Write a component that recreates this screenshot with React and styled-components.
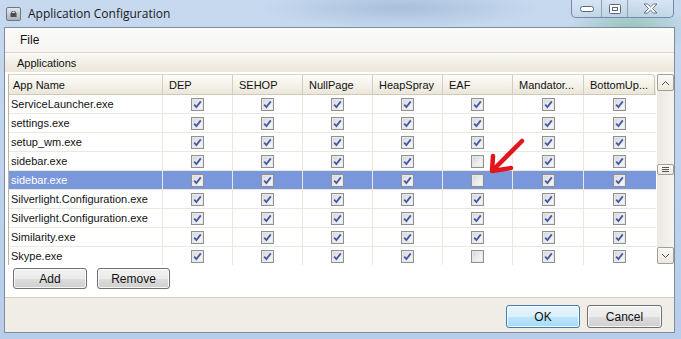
import React from "react";
import styled, { createGlobalStyle } from "styled-components";

const GlobalStyle = createGlobalStyle`
	html, body {
		margin: 0;
		padding: 0;
	}
	body {
		width: 681px;
		height: 339px;
		overflow: hidden;
		font-family: "Liberation Sans", Arial, sans-serif;
		background: linear-gradient(180deg, #c3d6ee 0%, #b9cfeb 40%, #aec8e8 100%);
	}
`;

const Window = styled.div`
	position: relative;
	width: 681px;
	height: 339px;
	display: flex;
	flex-direction: column;
	background:
		radial-gradient(ellipse 60px 30px at 630px 30px, rgba(90, 170, 120, 0.45), transparent),
		radial-gradient(ellipse 140px 20px at 400px 8px, rgba(150, 175, 205, 0.6), transparent),
		linear-gradient(180deg, #c6d9ef 0%, #b7cdea 100%);
`;

const TitleBar = styled.div`
	height: 27px;
	display: flex;
	align-items: flex-start;
	flex-shrink: 0;
`;

const AppIcon = styled.div`
	width: 13px;
	height: 12px;
	margin: 7px 0 0 6px;
	border: 1px solid #6f7780;
	border-radius: 2px;
	background: linear-gradient(180deg, #e4e8ec 0%, #a9b1ba 100%);
	display: flex;
	align-items: center;
	justify-content: center;
`;

const Title = styled.div`
	margin: 5px 0 0 7px;
	font-size: 12px;
	color: #1a1a1a;
	font-family: "Open Sans", sans-serif;
`;

const Caption = styled.div`
	margin-left: auto;
	margin-right: 7px;
	display: flex;
	height: 17px;
	border: 1px solid #7389a6;
	border-top: none;
	border-radius: 0 0 5px 5px;
	background: linear-gradient(180deg, rgba(230, 238, 248, 0.5), rgba(200, 216, 236, 0.6));
	overflow: hidden;
`;

const CaptionBtn = styled.div`
	width: ${(p) => p.w}px;
	display: flex;
	align-items: center;
	justify-content: center;
	border-left: ${(p) => (p.first ? "none" : "1px solid #8ea2bd")};
`;

const Client = styled.div`
	flex: 1;
	margin: 0 6px 6px 4px;
	border: 1px solid #7f8c9c;
	display: flex;
	flex-direction: column;
	background: #f0ede6;
`;

const MenuBar = styled.div`
	height: 24px;
	display: flex;
	align-items: center;
	padding-left: 15px;
	font-size: 12px;
	color: #111;
	background: linear-gradient(180deg, #fbfbfa 0%, #f6f5f1 100%);
	border-bottom: 1px solid #dcd6c5;
`;

const GroupHeader = styled.div`
	height: 19px;
	display: flex;
	align-items: center;
	padding-left: 12px;
	font-size: 11px;
	color: #111;
	background: linear-gradient(180deg, #fbfaf7 0%, #f1ede3 60%, #ebe6d8 100%);
`;

const Panel = styled.div`
	background: #fff;
	padding: 2px 0 8px 3px;
	display: flex;
	flex-direction: column;
	border-bottom: 1px solid #d6d0c2;
`;

const GridArea = styled.div`
	display: flex;
	align-items: flex-start;
`;

const Grid = styled.div`
	width: 647px;
	border-left: 1px solid #b9b4a6;
	font-size: 11px;
	color: #111;
`;

const HeaderRow = styled.div`
	display: grid;
	grid-template-columns: 154px 70px 70px 70px 70px 70px 71px 71px;
	height: 19px;
	background: linear-gradient(180deg, #fdfcfa 0%, #f4f1e9 55%, #ebe6d9 100%);
	border-top: 1px solid #d9d4c6;
	border-bottom: 1px solid #cfc9b8;
	border-radius: 0 4px 0 0;
`;

const HeadCell = styled.div`
	display: flex;
	align-items: center;
	padding-left: ${(p) => (p.first ? 4 : 6)}px;
	border-right: 1px solid #d4cebe;
	white-space: nowrap;
	overflow: hidden;
	&:last-child {
		border-right: 1px solid #c9c3b2;
		border-radius: 0 4px 0 0;
	}
`;

const Row = styled.div`
	display: grid;
	grid-template-columns: 154px 70px 70px 70px 70px 70px 71px 71px;
	height: 18px;
	border-bottom: 1px solid #ebe8df;
	background: ${(p) => (p.selected ? "#7b97dc" : "#fff")};
	color: ${(p) => (p.selected ? "#fff" : "#111")};
	&:last-child {
		border-bottom: none;
	}
`;

const NameCell = styled.div`
	display: flex;
	align-items: center;
	padding-left: 2px;
	border-right: 1px solid #ebe8df;
	white-space: nowrap;
`;

const BoxCell = styled.div`
	display: flex;
	align-items: center;
	justify-content: center;
	border-right: 1px solid #ebe8df;
	&:last-child {
		border-right: none;
	}
`;

const Box = styled.div`
	width: 11px;
	height: 11px;
	border: 1px solid #8f9092;
	background: linear-gradient(135deg, #d2d3d5 0%, #eceded 55%, #f7f7f7 100%);
	box-shadow: inset 0 0 0 1px #e8e8e8;
	display: flex;
	align-items: center;
	justify-content: center;
`;

const ScrollBar = styled.div`
	width: 17px;
	height: 190px;
	margin-left: 1px;
	background: linear-gradient(90deg, #ece9e2 0%, #f6f4f0 100%);
	display: flex;
	flex-direction: column;
	align-items: center;
	justify-content: space-between;
`;

const ScrollBtn = styled.div`
	width: 15px;
	height: 15px;
	border: 1px solid #a59f92;
	border-radius: 2px;
	background: linear-gradient(180deg, #fbfaf8 0%, #ece8df 100%);
	display: flex;
	align-items: center;
	justify-content: center;
`;

const Thumb = styled.div`
	width: 15px;
	height: 9px;
	border: 1px solid #a59f92;
	border-radius: 2px;
	background: linear-gradient(180deg, #fbfaf8 0%, #ece8df 100%);
	display: flex;
	align-items: center;
	justify-content: center;
`;

const ButtonRow = styled.div`
	display: flex;
	gap: 10px;
	padding: 3px 0 0 5px;
`;

const Button = styled.div`
	width: ${(p) => p.w || 70}px;
	height: ${(p) => p.h || 19}px;
	display: flex;
	align-items: center;
	justify-content: center;
	font-size: 12px;
	color: #111;
	border: 1px solid ${(p) => (p.primary ? "#3c7fb1" : "#707070")};
	border-radius: 3px;
	background: ${(p) =>
		p.primary
			? "linear-gradient(180deg, #eaf6fd 0%, #d9f0fc 50%, #bee6fd 51%, #a7d9f5 100%)"
			: "linear-gradient(180deg, #f2f2f2 0%, #ebebeb 50%, #dddddd 51%, #cfcfcf 100%)"};
	box-shadow: inset 0 0 0 1px rgba(255, 255, 255, 0.8);
`;

const Footer = styled.div`
	flex: 1;
	display: flex;
	justify-content: flex-end;
	align-items: flex-start;
	gap: 7px;
	padding: 7px 12px 0 0;
	background: #f0ede6;
`;

const Arrow = styled.svg`
	position: absolute;
	left: 486px;
	top: 136px;
	pointer-events: none;
`;

const columns = ["App Name", "DEP", "SEHOP", "NullPage", "HeapSpray", "EAF", "Mandator...", "BottomUp..."];

const apps = [
	{ name: "ServiceLauncher.exe", eaf: true },
	{ name: "settings.exe", eaf: true },
	{ name: "setup_wm.exe", eaf: true },
	{ name: "sidebar.exe", eaf: false },
	{ name: "sidebar.exe", eaf: false, selected: true },
	{ name: "Silverlight.Configuration.exe", eaf: true },
	{ name: "Silverlight.Configuration.exe", eaf: true },
	{ name: "Similarity.exe", eaf: true },
	{ name: "Skype.exe", eaf: false },
];

const CheckBox = ({ checked }) => (
	<Box>
		{checked && (
			<svg width="9" height="9" viewBox="0 0 9 9">
				<path d="M1.2 4.6 L3.4 7 L7.8 1.4" fill="none" stroke="#4557a8" strokeWidth="1.8" />
			</svg>
		)}
	</Box>
);

const Chevron = ({ up }) => (
	<svg width="9" height="6" viewBox="0 0 9 6">
		<path d={up ? "M1 5 L4.5 1.5 L8 5" : "M1 1 L4.5 4.5 L8 1"} fill="none" stroke="#4d4d4d" strokeWidth="1" />
	</svg>
);

const App = () => {
	return (
		<Window>
			<GlobalStyle />
			<TitleBar>
				<AppIcon>
					<svg width="7" height="6" viewBox="0 0 7 6">
						<rect x="0.5" y="2" width="6" height="4" fill="#4a4f57" />
						<path d="M1.5 2.5 V1.5 A2 1.5 0 0 1 5.5 1.5 V2.5" fill="none" stroke="#4a4f57" />
					</svg>
				</AppIcon>
				<Title>Application Configuration</Title>
				<Caption>
					<CaptionBtn w={29} first>
						<svg width="14" height="6" viewBox="0 0 14 6">
							<rect x="0.5" y="0.5" width="13" height="5" rx="2" fill="#fff" stroke="#5b6777" />
						</svg>
					</CaptionBtn>
					<CaptionBtn w={25}>
						<svg width="12" height="10" viewBox="0 0 12 10">
							<rect x="0.5" y="0.5" width="11" height="9" rx="1" fill="#fff" stroke="#5b6777" />
							<rect x="3.5" y="3.5" width="5" height="3" fill="none" stroke="#5b6777" />
						</svg>
					</CaptionBtn>
					<CaptionBtn w={45}>
						<svg width="15" height="11" viewBox="0 0 15 11">
							<path
								d="M1 1 H4.5 L7.5 3.8 L10.5 1 H14 L9.5 5.5 L14 10 H10.5 L7.5 7.2 L4.5 10 H1 L5.5 5.5 Z"
								fill="#fff"
								stroke="#5b6777"
								strokeWidth="0.9"
							/>
						</svg>
					</CaptionBtn>
				</Caption>
			</TitleBar>
			<Client>
				<MenuBar>File</MenuBar>
				<GroupHeader>Applications</GroupHeader>
				<Panel>
					<GridArea>
						<Grid>
							<HeaderRow>
								{columns.map((c, i) => (
									<HeadCell key={c} first={i === 0}>
										{c}
									</HeadCell>
								))}
							</HeaderRow>
							{apps.map((a, i) => (
								<Row key={i} selected={a.selected}>
									<NameCell>{a.name}</NameCell>
									{columns.slice(1).map((c) => (
										<BoxCell key={c}>
											<CheckBox checked={c === "EAF" ? a.eaf : true} />
										</BoxCell>
									))}
								</Row>
							))}
						</Grid>
						<ScrollBar>
							<ScrollBtn>
								<Chevron up />
							</ScrollBtn>
							<Thumb>
								<svg width="9" height="5" viewBox="0 0 9 5">
									<path d="M1 0.5 H8 M1 2.5 H8 M1 4.5 H8" stroke="#555" strokeWidth="1" />
								</svg>
							</Thumb>
							<ScrollBtn>
								<Chevron />
							</ScrollBtn>
						</ScrollBar>
					</GridArea>
					<ButtonRow>
						<Button w={72} h={19}>Add</Button>
						<Button w={71} h={19}>Remove</Button>
					</ButtonRow>
				</Panel>
				<Footer>
					<Button w={72} h={21} primary>OK</Button>
					<Button w={73} h={21}>Cancel</Button>
				</Footer>
			</Client>
			<Arrow width="40" height="40" viewBox="0 0 40 40">
				<path d="M36 5 L8 33" stroke="#e3141b" strokeWidth="4.5" strokeLinecap="round" fill="none" />
				<path d="M7 20 L6 35 L25 32" stroke="#e3141b" strokeWidth="4.5" strokeLinecap="round" strokeLinejoin="round" fill="none" />
			</Arrow>
		</Window>
	);
};

export default App;
